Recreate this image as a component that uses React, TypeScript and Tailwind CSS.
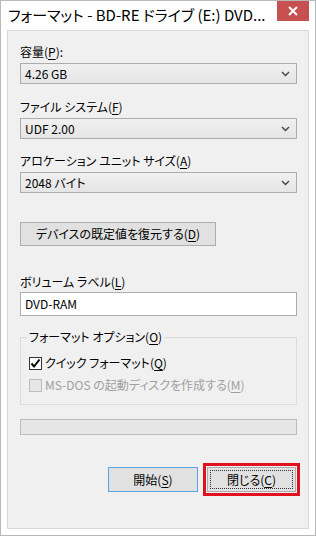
import type { ReactNode } from "react";

const font = "font-['Meiryo_UI','Noto_Sans_CJK_JP',sans-serif] [font-feature-settings:'palt']";

function U({ children }: { children: ReactNode }) {
  return <span className="underline underline-offset-2 decoration-1">{children}</span>;
}

function Chevron() {
  return (
    <svg width="9" height="6" viewBox="0 0 9 6" className="shrink-0">
      <polyline points="1,1 4.5,4.5 8,1" fill="none" stroke="#444" strokeWidth="1.4" />
    </svg>
  );
}

function Combo({ value }: { value: string }) {
  return (
    <div className="mt-[3px] h-[21px] flex items-center justify-between pl-[4px] pr-[6px] border border-[#acacac] bg-gradient-to-b from-[#f0f0f0] to-[#e5e5e5] text-[12px] text-black">
      <span>{value}</span>
      <Chevron />
    </div>
  );
}

function Label({ children, className = "" }: { children: ReactNode; className?: string }) {
  return <div className={`h-4 leading-4 text-[12px] text-black ${className}`}>{children}</div>;
}

export default function App() {
  return (
    <div className={`w-[316px] h-[536px] bg-white border border-[#b9b9b9] flex flex-col ${font}`}>
      {/* title bar */}
      <div className="h-[29px] flex items-start justify-between pl-[7px] pr-[6px]">
        <div className="pt-[4px] text-[15px] leading-[20px] text-black whitespace-nowrap">
          フォーマット - BD-RE ドライブ (E:) DVD...
        </div>
        <div className="w-[32px] h-[20px] bg-[#c75050] flex items-center justify-center shrink-0">
          <svg width="10" height="10" viewBox="0 0 10 10">
            <path d="M1 1 L9 9 M9 1 L1 9" stroke="#fff" strokeWidth="2" />
          </svg>
        </div>
      </div>

      {/* client area */}
      <div className="mx-[6px] flex-1 mb-[6px] bg-[#f0f0f0] border border-[#d9d9d9] flex flex-col pt-[13px] pl-[12px] pr-[11px]">
        <Label>容量(<U>P</U>):</Label>
        <Combo value="4.26 GB" />

        <Label className="mt-[15px]">ファイル システム(<U>F</U>)</Label>
        <Combo value="UDF 2.00" />

        <Label className="mt-[14px]">アロケーション ユニット サイズ(<U>A</U>)</Label>
        <Combo value="2048 バイト" />

        <div className="mt-[29px] w-[196px] h-[24px] border border-[#adadad] bg-[#e1e1e1] flex items-center justify-center text-[12px] text-black">
          デバイスの既定値を復元する(<U>D</U>)
        </div>

        <Label className="mt-[28px]">ボリューム ラベル(<U>L</U>)</Label>
        <div className="mt-[2px] h-[24px] border border-[#abadb3] bg-white flex items-center pl-[4px] text-[12px] text-black">
          DVD-RAM
        </div>

        <fieldset className="mt-[13px] h-[76px] border border-[#dcdcdc] px-[9px]">
          <legend className="ml-[-3px] px-[2px] h-4 leading-4 text-[12px] text-black">
            フォーマット オプション(<U>O</U>)
          </legend>
          <div className="mt-[10px] flex items-center gap-[3px] h-4 -ml-px">
            <div className="w-[13px] h-[13px] border border-[#333] bg-white flex items-center justify-center">
              <svg width="11" height="11" viewBox="0 0 11 11">
                <polyline points="1.5,5.5 4,8.5 9.5,1.5" fill="none" stroke="#000" strokeWidth="2" />
              </svg>
            </div>
            <span className="text-[12px] leading-4 text-black">クイック フォーマット(<U>Q</U>)</span>
          </div>
          <div className="mt-[6px] flex items-center gap-[3px] h-4 -ml-px">
            <div className="w-[13px] h-[13px] border border-[#bcbcbc] bg-[#e6e6e6]" />
            <span className="text-[12px] leading-4 text-[#a0a0a0]">MS-DOS の起動ディスクを作成する(<U>M</U>)</span>
          </div>
        </fieldset>

        <div className="mt-[14px] h-[16px] border border-[#bcbcbc] bg-[#e6e6e6]" />

        <div className="mt-[28px] flex items-center justify-end gap-[5px] mr-[-3px]">
          <div className="w-[90px] h-[25px] border border-[#5fa2e0] bg-[#e1e1e1] flex items-center justify-center text-[12px] text-black">
            開始(<U>S</U>)
          </div>
          <div className="border-[3px] border-[#e0101e] p-px">
            <div className="w-[89px] h-[25px] border border-[#adadad] bg-[#e1e1e1] p-[2px]">
              <div className="w-full h-full border border-dotted border-[#333] flex items-center justify-center text-[12px] text-black">
                閉じる(<U>C</U>)
              </div>
            </div>
          </div>
        </div>
      </div>
    </div>
  );
}
